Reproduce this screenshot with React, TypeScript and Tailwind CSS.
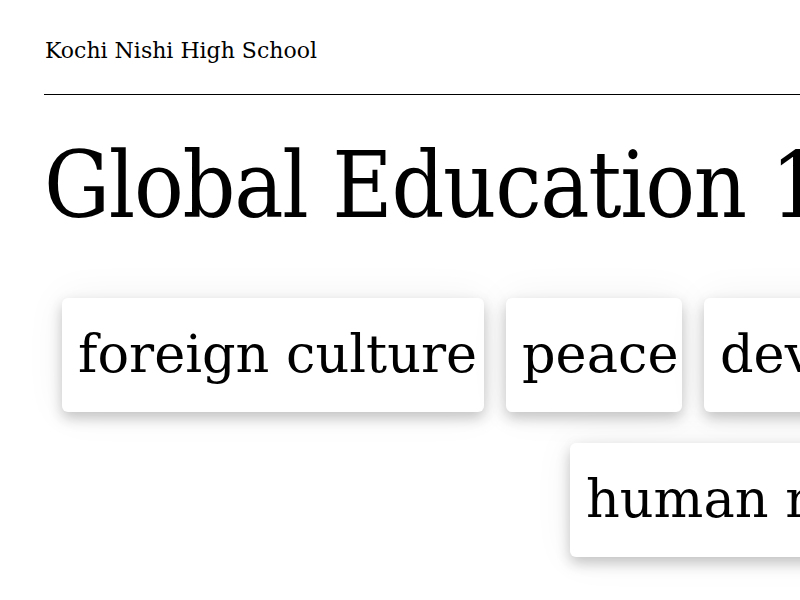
import React from "react";

const serif = { fontFamily: '"DejaVu Serif", "Liberation Serif", serif' };

function Tag({ label, w }: { label: string; w: string }) {
  return (
    <div
      className={`shrink-0 h-[114px] ${w} bg-white rounded-[6px] shadow-[0_6px_14px_rgba(0,0,0,0.22),0_0_40px_rgba(0,0,0,0.06)] flex items-center pl-4 overflow-hidden whitespace-nowrap text-[52.5px] text-black leading-none`}
    >
      <span className="pb-[2px]">{label}</span>
    </div>
  );
}

export default function App() {
  return (
    <div className="w-[800px] h-[600px] bg-white overflow-hidden" style={serif}>
      <div className="pl-[44px] pt-[37px]">
        <div className="text-[22px] leading-[28px] text-black pl-px">Kochi Nishi High School</div>
        <div className="mt-[29px] h-px bg-black w-[756px]" />
        <div className="mt-[36px] text-[92px] leading-[110px] text-black whitespace-nowrap font-stretch-condensed tracking-[-1.3px]">
          Global Education 1
        </div>
      </div>
      <div className="mt-[57px] flex flex-col gap-[31px]">
        <div className="flex gap-[22px] pl-[62px]">
          <Tag label="foreign culture" w="w-[422px]" />
          <Tag label="peace" w="w-[176px]" />
          <Tag label="development" w="w-[400px]" />
        </div>
        <div className="flex gap-[22px] pl-[570px]">
          <Tag label="human rights" w="w-[400px]" />
        </div>
      </div>
    </div>
  );
}
